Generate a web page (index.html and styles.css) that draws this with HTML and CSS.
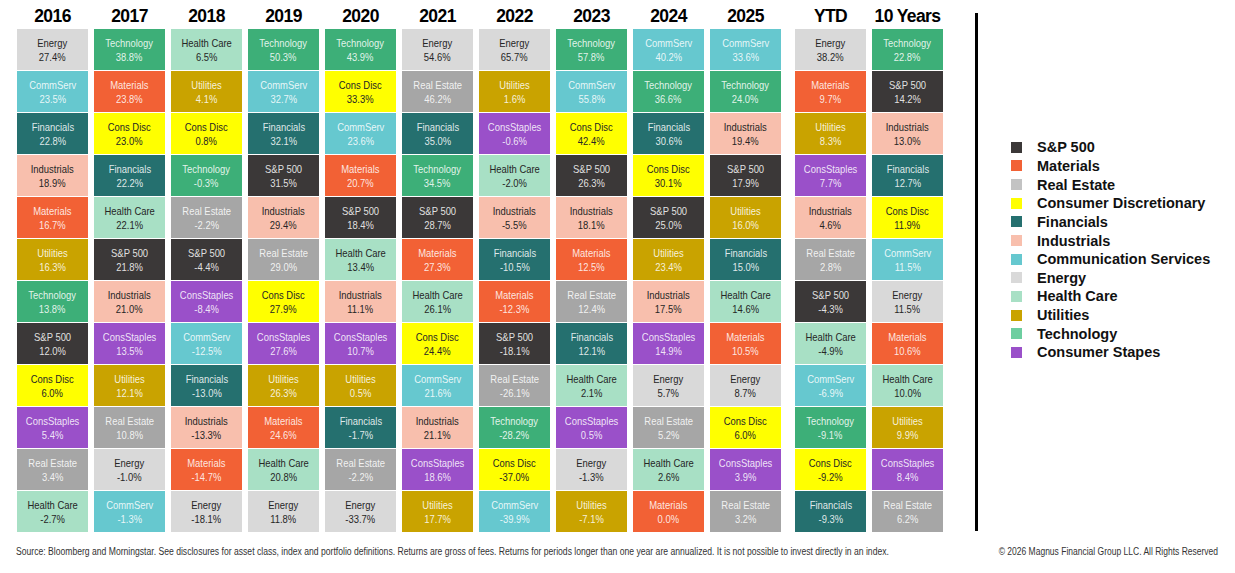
FILE: index.html
```html
<!DOCTYPE html>
<html>
<head>
<meta charset="utf-8">
<title>Sector Returns</title>
<link rel="stylesheet" href="styles.css">
</head>
<body>
<div class="page">
  <div class="top">
    <div class="chart">
      <div class="col">
        <div class="yr"><span>2016</span></div>
        <div class="c en"><span>Energy<br>27.4%</span></div>
        <div class="c cs"><span>CommServ<br>23.5%</span></div>
        <div class="c fin"><span>Financials<br>22.8%</span></div>
        <div class="c ind"><span>Industrials<br>18.9%</span></div>
        <div class="c mat"><span>Materials<br>16.7%</span></div>
        <div class="c ut"><span>Utilities<br>16.3%</span></div>
        <div class="c tech"><span>Technology<br>13.8%</span></div>
        <div class="c sp"><span>S&amp;P 500<br>12.0%</span></div>
        <div class="c cd"><span>Cons Disc<br>6.0%</span></div>
        <div class="c st"><span>ConsStaples<br>5.4%</span></div>
        <div class="c re"><span>Real Estate<br>3.4%</span></div>
        <div class="c hc"><span>Health Care<br>-2.7%</span></div>
      </div>
      <div class="col">
        <div class="yr"><span>2017</span></div>
        <div class="c tech"><span>Technology<br>38.8%</span></div>
        <div class="c mat"><span>Materials<br>23.8%</span></div>
        <div class="c cd"><span>Cons Disc<br>23.0%</span></div>
        <div class="c fin"><span>Financials<br>22.2%</span></div>
        <div class="c hc"><span>Health Care<br>22.1%</span></div>
        <div class="c sp"><span>S&amp;P 500<br>21.8%</span></div>
        <div class="c ind"><span>Industrials<br>21.0%</span></div>
        <div class="c st"><span>ConsStaples<br>13.5%</span></div>
        <div class="c ut"><span>Utilities<br>12.1%</span></div>
        <div class="c re"><span>Real Estate<br>10.8%</span></div>
        <div class="c en"><span>Energy<br>-1.0%</span></div>
        <div class="c cs"><span>CommServ<br>-1.3%</span></div>
      </div>
      <div class="col">
        <div class="yr"><span>2018</span></div>
        <div class="c hc"><span>Health Care<br>6.5%</span></div>
        <div class="c ut"><span>Utilities<br>4.1%</span></div>
        <div class="c cd"><span>Cons Disc<br>0.8%</span></div>
        <div class="c tech"><span>Technology<br>-0.3%</span></div>
        <div class="c re"><span>Real Estate<br>-2.2%</span></div>
        <div class="c sp"><span>S&amp;P 500<br>-4.4%</span></div>
        <div class="c st"><span>ConsStaples<br>-8.4%</span></div>
        <div class="c cs"><span>CommServ<br>-12.5%</span></div>
        <div class="c fin"><span>Financials<br>-13.0%</span></div>
        <div class="c ind"><span>Industrials<br>-13.3%</span></div>
        <div class="c mat"><span>Materials<br>-14.7%</span></div>
        <div class="c en"><span>Energy<br>-18.1%</span></div>
      </div>
      <div class="col">
        <div class="yr"><span>2019</span></div>
        <div class="c tech"><span>Technology<br>50.3%</span></div>
        <div class="c cs"><span>CommServ<br>32.7%</span></div>
        <div class="c fin"><span>Financials<br>32.1%</span></div>
        <div class="c sp"><span>S&amp;P 500<br>31.5%</span></div>
        <div class="c ind"><span>Industrials<br>29.4%</span></div>
        <div class="c re"><span>Real Estate<br>29.0%</span></div>
        <div class="c cd"><span>Cons Disc<br>27.9%</span></div>
        <div class="c st"><span>ConsStaples<br>27.6%</span></div>
        <div class="c ut"><span>Utilities<br>26.3%</span></div>
        <div class="c mat"><span>Materials<br>24.6%</span></div>
        <div class="c hc"><span>Health Care<br>20.8%</span></div>
        <div class="c en"><span>Energy<br>11.8%</span></div>
      </div>
      <div class="col">
        <div class="yr"><span>2020</span></div>
        <div class="c tech"><span>Technology<br>43.9%</span></div>
        <div class="c cd"><span>Cons Disc<br>33.3%</span></div>
        <div class="c cs"><span>CommServ<br>23.6%</span></div>
        <div class="c mat"><span>Materials<br>20.7%</span></div>
        <div class="c sp"><span>S&amp;P 500<br>18.4%</span></div>
        <div class="c hc"><span>Health Care<br>13.4%</span></div>
        <div class="c ind"><span>Industrials<br>11.1%</span></div>
        <div class="c st"><span>ConsStaples<br>10.7%</span></div>
        <div class="c ut"><span>Utilities<br>0.5%</span></div>
        <div class="c fin"><span>Financials<br>-1.7%</span></div>
        <div class="c re"><span>Real Estate<br>-2.2%</span></div>
        <div class="c en"><span>Energy<br>-33.7%</span></div>
      </div>
      <div class="col">
        <div class="yr"><span>2021</span></div>
        <div class="c en"><span>Energy<br>54.6%</span></div>
        <div class="c re"><span>Real Estate<br>46.2%</span></div>
        <div class="c fin"><span>Financials<br>35.0%</span></div>
        <div class="c tech"><span>Technology<br>34.5%</span></div>
        <div class="c sp"><span>S&amp;P 500<br>28.7%</span></div>
        <div class="c mat"><span>Materials<br>27.3%</span></div>
        <div class="c hc"><span>Health Care<br>26.1%</span></div>
        <div class="c cd"><span>Cons Disc<br>24.4%</span></div>
        <div class="c cs"><span>CommServ<br>21.6%</span></div>
        <div class="c ind"><span>Industrials<br>21.1%</span></div>
        <div class="c st"><span>ConsStaples<br>18.6%</span></div>
        <div class="c ut"><span>Utilities<br>17.7%</span></div>
      </div>
      <div class="col">
        <div class="yr"><span>2022</span></div>
        <div class="c en"><span>Energy<br>65.7%</span></div>
        <div class="c ut"><span>Utilities<br>1.6%</span></div>
        <div class="c st"><span>ConsStaples<br>-0.6%</span></div>
        <div class="c hc"><span>Health Care<br>-2.0%</span></div>
        <div class="c ind"><span>Industrials<br>-5.5%</span></div>
        <div class="c fin"><span>Financials<br>-10.5%</span></div>
        <div class="c mat"><span>Materials<br>-12.3%</span></div>
        <div class="c sp"><span>S&amp;P 500<br>-18.1%</span></div>
        <div class="c re"><span>Real Estate<br>-26.1%</span></div>
        <div class="c tech"><span>Technology<br>-28.2%</span></div>
        <div class="c cd"><span>Cons Disc<br>-37.0%</span></div>
        <div class="c cs"><span>CommServ<br>-39.9%</span></div>
      </div>
      <div class="col">
        <div class="yr"><span>2023</span></div>
        <div class="c tech"><span>Technology<br>57.8%</span></div>
        <div class="c cs"><span>CommServ<br>55.8%</span></div>
        <div class="c cd"><span>Cons Disc<br>42.4%</span></div>
        <div class="c sp"><span>S&amp;P 500<br>26.3%</span></div>
        <div class="c ind"><span>Industrials<br>18.1%</span></div>
        <div class="c mat"><span>Materials<br>12.5%</span></div>
        <div class="c re"><span>Real Estate<br>12.4%</span></div>
        <div class="c fin"><span>Financials<br>12.1%</span></div>
        <div class="c hc"><span>Health Care<br>2.1%</span></div>
        <div class="c st"><span>ConsStaples<br>0.5%</span></div>
        <div class="c en"><span>Energy<br>-1.3%</span></div>
        <div class="c ut"><span>Utilities<br>-7.1%</span></div>
      </div>
      <div class="col">
        <div class="yr"><span>2024</span></div>
        <div class="c cs"><span>CommServ<br>40.2%</span></div>
        <div class="c tech"><span>Technology<br>36.6%</span></div>
        <div class="c fin"><span>Financials<br>30.6%</span></div>
        <div class="c cd"><span>Cons Disc<br>30.1%</span></div>
        <div class="c sp"><span>S&amp;P 500<br>25.0%</span></div>
        <div class="c ut"><span>Utilities<br>23.4%</span></div>
        <div class="c ind"><span>Industrials<br>17.5%</span></div>
        <div class="c st"><span>ConsStaples<br>14.9%</span></div>
        <div class="c en"><span>Energy<br>5.7%</span></div>
        <div class="c re"><span>Real Estate<br>5.2%</span></div>
        <div class="c hc"><span>Health Care<br>2.6%</span></div>
        <div class="c mat"><span>Materials<br>0.0%</span></div>
      </div>
      <div class="col">
        <div class="yr"><span>2025</span></div>
        <div class="c cs"><span>CommServ<br>33.6%</span></div>
        <div class="c tech"><span>Technology<br>24.0%</span></div>
        <div class="c ind"><span>Industrials<br>19.4%</span></div>
        <div class="c sp"><span>S&amp;P 500<br>17.9%</span></div>
        <div class="c ut"><span>Utilities<br>16.0%</span></div>
        <div class="c fin"><span>Financials<br>15.0%</span></div>
        <div class="c hc"><span>Health Care<br>14.6%</span></div>
        <div class="c mat"><span>Materials<br>10.5%</span></div>
        <div class="c en"><span>Energy<br>8.7%</span></div>
        <div class="c cd"><span>Cons Disc<br>6.0%</span></div>
        <div class="c st"><span>ConsStaples<br>3.9%</span></div>
        <div class="c re"><span>Real Estate<br>3.2%</span></div>
      </div>
      <div class="col col-ytd">
        <div class="yr"><span>YTD</span></div>
        <div class="c en"><span>Energy<br>38.2%</span></div>
        <div class="c mat"><span>Materials<br>9.7%</span></div>
        <div class="c ut"><span>Utilities<br>8.3%</span></div>
        <div class="c st"><span>ConsStaples<br>7.7%</span></div>
        <div class="c ind"><span>Industrials<br>4.6%</span></div>
        <div class="c re"><span>Real Estate<br>2.8%</span></div>
        <div class="c sp"><span>S&amp;P 500<br>-4.3%</span></div>
        <div class="c hc"><span>Health Care<br>-4.9%</span></div>
        <div class="c cs"><span>CommServ<br>-6.9%</span></div>
        <div class="c tech"><span>Technology<br>-9.1%</span></div>
        <div class="c cd"><span>Cons Disc<br>-9.2%</span></div>
        <div class="c fin"><span>Financials<br>-9.3%</span></div>
      </div>
      <div class="col">
        <div class="yr"><span>10 Years</span></div>
        <div class="c tech"><span>Technology<br>22.8%</span></div>
        <div class="c sp"><span>S&amp;P 500<br>14.2%</span></div>
        <div class="c ind"><span>Industrials<br>13.0%</span></div>
        <div class="c fin"><span>Financials<br>12.7%</span></div>
        <div class="c cd"><span>Cons Disc<br>11.9%</span></div>
        <div class="c cs"><span>CommServ<br>11.5%</span></div>
        <div class="c en"><span>Energy<br>11.5%</span></div>
        <div class="c mat"><span>Materials<br>10.6%</span></div>
        <div class="c hc"><span>Health Care<br>10.0%</span></div>
        <div class="c ut"><span>Utilities<br>9.9%</span></div>
        <div class="c st"><span>ConsStaples<br>8.4%</span></div>
        <div class="c re"><span>Real Estate<br>6.2%</span></div>
      </div>
    </div>
    <div class="divider"></div>
    <ul class="legend">
      <li><i class="sw sp"></i>S&amp;P 500</li>
      <li><i class="sw mat"></i>Materials</li>
      <li><i class="sw re-l"></i>Real Estate</li>
      <li><i class="sw cd"></i>Consumer Discretionary</li>
      <li><i class="sw fin"></i>Financials</li>
      <li><i class="sw ind"></i>Industrials</li>
      <li><i class="sw cs"></i>Communication Services</li>
      <li><i class="sw en"></i>Energy</li>
      <li><i class="sw hc"></i>Health Care</li>
      <li><i class="sw ut"></i>Utilities</li>
      <li><i class="sw tech-l"></i>Technology</li>
      <li><i class="sw st"></i>Consumer Stapes</li>
    </ul>
  </div>
  <footer class="foot">
    <p class="src">Source: Bloomberg and Morningstar. See disclosures for asset class, index and portfolio definitions. Returns are gross of fees. Returns for periods longer than one year are annualized. It is not possible to invest directly in an index.</p>
    <p class="copy">© 2026 Magnus Financial Group LLC. All Rights Reserved</p>
  </footer>
</div>
</body>
</html>
```

FILE: styles.css
```css
* { box-sizing: border-box; }
html, body { margin: 0; padding: 0; background: #fff; }
body {
  width: 1235px;
  height: 573px;
  overflow: hidden;
  font-family: "Liberation Sans", Arial, sans-serif;
  color: #111;
}
.page { width: 1235px; height: 573px; }
.top { display: flex; align-items: flex-start; height: 535px; }
.chart { display: flex; gap: 6px; padding-left: 17px; }
.col { width: 71px; display: flex; flex-direction: column; gap: 1px; }
.col-ytd { margin-left: 8px; }
.yr {
  height: 28px;
  padding-top: 4px;
  text-align: center;
  font-weight: bold;
  font-size: 17.5px;
  line-height: 24px;
  letter-spacing: -0.6px;
  color: #000;
  white-space: nowrap;
}
.c {
  height: 41px;
  display: flex;
  flex-direction: column;
  justify-content: center;
  align-items: center;
  text-align: center;
  font-size: 11.5px;
  line-height: 14px;
  color: rgba(255,255,255,0.86);
  white-space: nowrap;
}
.c span {
  display: inline-block;
  transform: scaleX(0.82);
  transform-origin: 50% 50%;
}
.sp { background: #3b3838; }
.mat { background: #f26135; }
.re { background: #a6a6a6; }
.cd { background: #ffff00; color: #262626; }
.fin { background: #25706f; }
.ind { background: #f8bfad; color: #262626; }
.cs { background: #66c8cf; }
.en { background: #d9d9d9; color: #262626; }
.hc { background: #a8e0c5; color: #262626; }
.ut { background: #c9a300; }
.tech { background: #3daf78; }
.st { background: #9a50c9; }
.divider {
  width: 3px;
  height: 518px;
  margin-top: 13px;
  margin-left: 32px;
  background: #000;
}
.legend {
  list-style: none;
  margin: 138px 0 0 33px;
  padding: 0;
  font-size: 14.5px;
  font-weight: bold;
  color: #111;
}
.legend li {
  display: flex;
  align-items: center;
  height: 18.65px;
  white-space: nowrap;
}
.sw {
  display: inline-block;
  width: 11px;
  height: 11px;
  margin-right: 15px;
}
.re-l { background: #c3c3c3; }
.tech-l { background: #6dcea0; }
.foot {
  display: flex;
  padding: 11px 17px 0 16px;
  font-size: 10px;
  color: #333;
}
.foot p { margin: 0; white-space: nowrap; }
.src {
  flex: 1 1 0;
  min-width: 0;
  transform: scaleX(0.86);
  transform-origin: 0 50%;
}
.copy {
  flex: none;
  transform: scaleX(0.85);
  transform-origin: 100% 50%;
}
```
